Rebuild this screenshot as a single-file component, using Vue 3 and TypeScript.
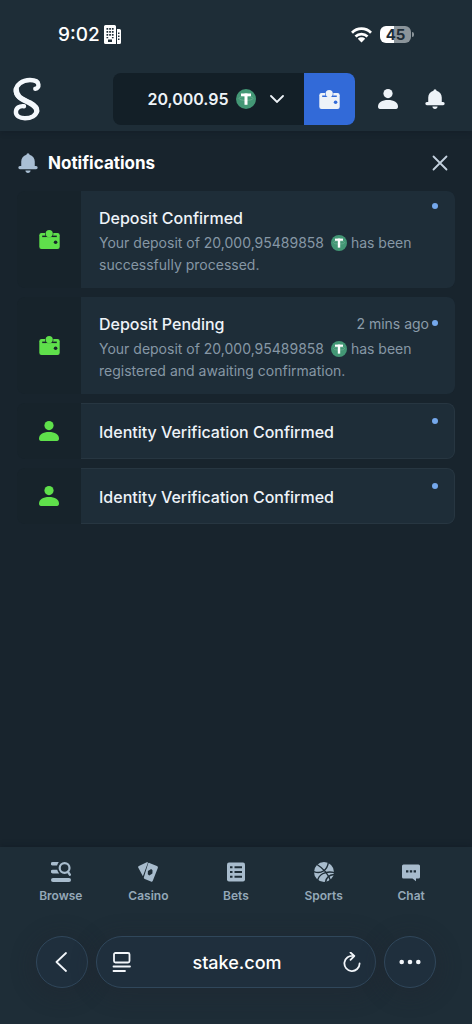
<script setup lang="ts">
import { ref } from 'vue'

interface Notice {
  id: number
  icon: 'wallet' | 'user'
  title: string
  time?: string
  amount?: string
  outcome?: string
}

interface NavItem {
  icon: string
  label: string
}

const notices: Notice[] = [
  { id: 1, icon: 'wallet', title: 'Deposit Confirmed', amount: '20,000,95489858', outcome: 'successfully processed.' },
  { id: 2, icon: 'wallet', title: 'Deposit Pending', time: '2 mins ago', amount: '20,000,95489858', outcome: 'registered and awaiting confirmation.' },
  { id: 3, icon: 'user', title: 'Identity Verification Confirmed' },
  { id: 4, icon: 'user', title: 'Identity Verification Confirmed' },
]

const navItems: NavItem[] = [
  { icon: 'browse', label: 'Browse' },
  { icon: 'casino', label: 'Casino' },
  { icon: 'bets', label: 'Bets' },
  { icon: 'sports', label: 'Sports' },
  { icon: 'chat', label: 'Chat' },
]

const address = ref('stake.com')
</script>

<template>
  <div class="screen">
    <svg class="sprite" aria-hidden="true">
      <symbol id="wallet" viewBox="0 0 21 19">
        <rect x="0.3" y="3" width="20.4" height="16" rx="2.2" />
        <path class="hole" d="M3.2 5.6h14.6v1.5H3.2z" />
        <circle class="hole" cx="10.2" cy="4" r="4.2" />
        <circle cx="10.2" cy="3.6" r="3.6" />
        <path d="M7 7.1h6.5v2H7z" />
        <circle class="hole" cx="16.6" cy="12.3" r="1.8" />
      </symbol>
      <symbol id="user" viewBox="0 0 20 20">
        <circle cx="10" cy="4.6" r="4.6" />
        <path d="M0 17.6C0 13.500 4 11 10 11s10 2.500 10 6.600c0 1.500-.6 2.400-2 2.400H2c-1.400 0-2-.9-2-2.400z" />
      </symbol>
      <symbol id="bell" viewBox="0 0 20 21">
        <path d="M8.400 1.900a1.600 1.600 0 0 1 3.200 0C15 2.700 17.100 5.500 17.100 9v4.700h1.400a1.500 1.500 0 0 1 0 3.300h-17a1.500 1.500 0 0 1 0-3.300h1.400V9c0-3.500 2.100-6.300 5.500-7.100z" />
        <path d="M7.300 18.300h5.400c0 1.600-1.200 2.600-2.700 2.600s-2.700-1-2.700-2.600z" />
      </symbol>
      <symbol id="tether" viewBox="0 0 20 20">
        <circle cx="10" cy="10" r="10" fill="#439775" />
        <ellipse cx="10" cy="9.400" rx="7" ry="2" fill="none" stroke="#74b398" stroke-width="0.7" />
        <rect x="5" y="4.500" width="10" height="2.700" fill="#fff" />
        <rect x="8.500" y="4.500" width="3" height="11.300" fill="#fff" />
      </symbol>
      <symbol id="browse" viewBox="0 0 20 20">
        <path d="M1.600 0h6.200a9 9 0 0 0-1.700 3.600H1.600a1.800 1.800 0 0 1 0-3.600zM1.600 7.800h4.600a9 9 0 0 0 2 3.600H1.600a1.800 1.800 0 0 1 0-3.600z" />
        <rect x="0" y="16" width="20" height="4" rx="2" />
        <circle cx="13.600" cy="6" r="4.900" fill="none" stroke="currentColor" stroke-width="2.200" />
        <path d="M16.800 9.700l2 3" fill="none" stroke="currentColor" stroke-width="2.400" stroke-linecap="round" />
      </symbol>
      <symbol id="casino" viewBox="0 0 20 20">
        <path d="M.9 4.100 8.700.3c.5-.2 1-.2 1.300.2L4.900 14.200.2 5.500C-.1 4.900.2 4.400.9 4.100z" />
        <path d="M11.400.9 18.900 4c.9.400 1.200 1 .9 1.900l-5 12.900c-.4.900-1 1.200-1.900.8l-6.100-2.500c-.9-.4-1.200-1-.9-1.900L10.100 1.500c.3-.7.7-.9 1.300-.6z" />
        <path class="hole" d="M13.200 6.900 9.900 8.900 9.800 12.300 11.300 13.500 14.400 11.500 14.500 8.200z" />
      </symbol>
      <symbol id="bets" viewBox="0 0 20 20">
        <rect x="1" y="0.500" width="18" height="19" rx="2" />
        <path class="hole" d="M4 4.200h2.500v2H4zM8.500 4.200H16v2H8.500zM4 9h2.500v2H4zM8.500 9H16v2H8.500zM4 13.800h2.500v2H4zM8.500 13.800H16v2H8.500z" />
      </symbol>
      <symbol id="sports" viewBox="0 0 20 20">
        <circle cx="10" cy="10" r="10" />
        <g class="seam">
          <path d="M3 2.500C7 5 13.500 10.500 16.500 18.500" />
          <path d="M-.5 9.500C7 12.500 13.500 8.500 14.500-.5" />
          <path d="M3.500 19C4.500 13 10.500 8.500 20.500 10.500" />
          <path d="M11.500 20.500C12 16 15 13 20.500 12.500" />
        </g>
      </symbol>
      <symbol id="chat" viewBox="0 0 20 20">
        <path d="M2.500 2.500h15A1.500 1.500 0 0 1 19 4v11a1.500 1.500 0 0 1-1.500 1.500H15v2.800l-3.500-2.800h-9A1.500 1.500 0 0 1 1 15V4a1.500 1.500 0 0 1 1.500-1.500z" />
        <path class="hole" d="M5 8.200h2.400v2.300H5zM8.800 8.200h2.400v2.300H8.800zM12.600 8.200H15v2.300h-2.400z" />
      </symbol>
    </svg>

    <header class="top">
      <div class="status">
        <div class="clock">
          <span>9:02</span>
          <svg class="building" viewBox="0 0 17 19" aria-hidden="true">
            <path d="M1.500 0h9A1.500 1.500 0 0 1 12 1.500V19H1.500A1.500 1.500 0 0 1 0 17.500v-16A1.500 1.500 0 0 1 1.500 0zM13 4h2.500A1.500 1.500 0 0 1 17 5.500v12a1.500 1.500 0 0 1-1.500 1.500H13z" />
            <path class="hole" d="M2.500 3h1.700v1.700H2.500zM5.200 3h1.700v1.700H5.200zM7.900 3h1.700v1.700H7.900zM2.500 6h1.700v1.700H2.500zM5.200 6h1.700v1.700H5.200zM7.900 6h1.700v1.700H7.900zM2.500 9h1.700v1.700H2.500zM5.200 9h1.700v1.700H5.200zM7.900 9h1.700v1.700H7.900zM2.500 12h1.700v1.200H2.500zM7.900 12h1.700v1.200H7.900zM4 14.500h4V17H4zM14 7.500h1.500V9H14zM14 10.500h1.500V12H14zM14 13.500h1.500V15H14z" />
          </svg>
        </div>
        <div class="signals">
          <svg class="wifi" viewBox="0 0 21 16" aria-label="Wi-Fi">
            <g fill="none" stroke="currentColor" stroke-width="2.700">
              <path d="M1 5.700C6.300.3 14.700.3 20 5.700" />
              <path d="M4.500 9.500c3.400-3.300 8.600-3.300 12 0" />
            </g>
            <path d="M6.800 11.700c2-1.900 5.400-1.900 7.400 0L10.500 15.600z" />
          </svg>
          <div class="battery"><span class="level">45</span></div>
        </div>
      </div>

      <div class="account">
        <a class="logo" href="#" aria-label="Stake home">
          <svg viewBox="0 0 28 44" aria-hidden="true">
            <path d="M22.300 11.800C24.600 11.600 25.700 9.600 25.400 7.500 25 4.500 21.500 3 17 3 9 3 2.900 8 2.900 14 3 20.500 10.500 22.500 17 26 21.500 28.500 24 30.500 23.900 33.500 23.600 38.500 18 41.300 12 41.300 6.300 41.300 2.900 38.800 2.900 35 2.900 31 6.500 28.600 11 29.200" />
            <path d="M3.200 12.500C3 20.500 10.500 22.500 17 26 21.500 28.500 24 30.500 23.800 34" class="spine" />
          </svg>
        </a>
        <div class="balance">
          <button class="amount" type="button">
            <span>20,000.95</span>
            <svg class="coin" aria-label="USDT"><use href="#tether" /></svg>
            <svg class="chevron" viewBox="0 0 14 8" aria-hidden="true"><path d="M1 1l6 6 6-6" /></svg>
          </button>
          <button class="pay" type="button" aria-label="Wallet">
            <svg class="wallet" aria-hidden="true"><use href="#wallet" /></svg>
          </button>
        </div>
        <div class="actions">
          <button type="button" aria-label="Profile"><svg class="icon" aria-hidden="true"><use href="#user" /></svg></button>
          <button type="button" aria-label="Notifications"><svg class="icon" aria-hidden="true"><use href="#bell" /></svg></button>
        </div>
      </div>
    </header>

    <main class="panel">
      <div class="heading">
        <svg class="icon" aria-hidden="true"><use href="#bell" /></svg>
        <h1>Notifications</h1>
        <button type="button" aria-label="Close">
          <svg viewBox="0 0 16 16" aria-hidden="true"><path d="M1.500 1.500l13 13M14.500 1.500l-13 13" /></svg>
        </button>
      </div>

      <ul class="list">
        <li v-for="notice in notices" :key="notice.id" class="notice" :class="{ brief: !notice.amount }">
          <div class="kind">
            <svg :class="notice.icon" aria-hidden="true"><use :href="'#' + notice.icon" /></svg>
          </div>
          <article class="card">
            <div class="title">
              <h2>{{ notice.title }}</h2>
              <time v-if="notice.time">{{ notice.time }}</time>
            </div>
            <p v-if="notice.amount">
              Your deposit of {{ notice.amount }}
              <svg class="coin" aria-label="USDT"><use href="#tether" /></svg>
              has been {{ notice.outcome }}
            </p>
            <span class="unread" :class="{ inline: notice.time }"></span>
          </article>
        </li>
      </ul>
    </main>

    <footer class="bottom">
      <nav class="tabs">
        <a v-for="item in navItems" :key="item.label" href="#">
          <svg aria-hidden="true"><use :href="'#' + item.icon" /></svg>
          <span>{{ item.label }}</span>
        </a>
      </nav>
      <div class="browser">
        <button class="round" type="button" aria-label="Back">
          <svg viewBox="0 0 20 20" aria-hidden="true"><path d="M14 1L4.500 10l9.500 9" /></svg>
        </button>
        <div class="address">
          <button type="button" aria-label="Page menu">
            <svg viewBox="0 0 20 20" aria-hidden="true"><rect x="2" y="1" width="15.500" height="9.500" rx="1.500" /><path d="M1.500 14.500H18M1.500 19H13" /></svg>
          </button>
          <input v-model="address" type="text" aria-label="Address" />
          <button type="button" aria-label="Reload">
            <svg viewBox="0 0 20 20" aria-hidden="true"><path d="M11.500 4A7.600 7.600 0 1 0 17.600 11.500M8.500.5L12.300 4 8.500 7.800" /></svg>
          </button>
        </div>
        <button class="round" type="button" aria-label="More">
          <svg class="dots" viewBox="0 0 22 6" aria-hidden="true"><circle cx="2.700" cy="3" r="2.300" /><circle cx="11" cy="3" r="2.300" /><circle cx="19.300" cy="3" r="2.300" /></svg>
        </button>
      </div>
    </footer>
  </div>
</template>

<style>
body {
  margin: 0;
  background: #18242d;
}
</style>

<style scoped>
.screen {
  display: flex;
  flex-direction: column;
  min-height: 100vh;
  background: #18242d;
  color: #eef3f8;
  font-family: Inter, "Liberation Sans", sans-serif;
}

.sprite {
  position: absolute;
  width: 0;
  height: 0;
}

svg {
  display: block;
  flex: none;
  fill: currentColor;
}

button {
  display: flex;
  align-items: center;
  justify-content: center;
  margin: 0;
  padding: 0;
  border: 0;
  background: none;
  color: inherit;
  font: inherit;
}

a {
  color: inherit;
  text-decoration: none;
}

h1,
h2,
p,
ul {
  margin: 0;
  padding: 0;
}

.hole {
  fill: var(--hole);
}

.seam {
  fill: none;
  stroke: var(--hole);
  stroke-width: 1.4;
}

.icon,
.user {
  width: 20px;
  height: 20px;
}

.wallet {
  width: 21px;
  height: 19px;
}

/* Top area */
.top {
  --hole: #1e2d37;
  padding-bottom: 6px;
  background: #1e2d37;
  box-shadow: 0 2px 5px rgba(10, 20, 30, 0.25);
}

.status {
  display: flex;
  align-items: center;
  justify-content: space-between;
  height: 69px;
  padding: 0 61px 0 58px;
  color: #fff;
}

.clock,
.signals {
  display: flex;
  align-items: center;
}

.clock {
  gap: 4px;
  font-size: 19px;
  font-weight: 500;
}

.building {
  width: 17px;
  height: 19px;
}

.signals {
  gap: 8px;
}

.wifi {
  width: 21px;
  height: 16px;
}

.battery {
  position: relative;
  width: 31px;
  height: 17px;
  border-radius: 6px;
  background: linear-gradient(90deg, #fff 45%, #8b949a 45%);
}

.battery::after {
  content: "";
  position: absolute;
  top: 6px;
  right: -3px;
  width: 2px;
  height: 5px;
  border-radius: 0 3px 3px 0;
  background: #8b949a;
}

.level {
  display: block;
  color: #1e2d37;
  font-size: 15px;
  font-weight: 700;
  line-height: 17px;
  text-align: center;
}

.account {
  display: flex;
  align-items: center;
  margin-top: 4px;
  padding: 0 27px 0 13px;
}

.logo svg {
  width: 28px;
  height: 44px;
  fill: none;
  stroke: #f4f8fc;
  stroke-width: 4.4;
  stroke-linecap: round;
}

.logo .spine {
  stroke-width: 5.4;
}

.balance {
  display: flex;
  flex: 1;
  height: 52px;
  margin-left: 72px;
  overflow: hidden;
  border-radius: 8px;
  background: #131f27;
}

.amount {
  flex: 1;
  padding-left: 14px;
  font-size: 16px;
  font-weight: 600;
}

.amount .coin {
  width: 20px;
  height: 20px;
  margin: 0 14px 0 7px;
}

.chevron {
  width: 14px;
  height: 8px;
  fill: none;
  stroke: currentColor;
  stroke-width: 1.8;
  stroke-linecap: round;
}

.pay {
  --hole: #326ad8;
  width: 51px;
  background: #326ad8;
}

.actions {
  display: flex;
  gap: 27px;
  margin-left: 23px;
}

/* Notifications */
.panel {
  flex: 1;
  padding: 16px 17px;
}

.heading {
  display: flex;
  align-items: center;
  height: 32px;
  padding-right: 7px;
}

.heading > .icon {
  margin: 0 10px 0 1px;
  color: #a9bfd4;
}

.heading h1 {
  flex: 1;
  color: #fff;
  font-size: 17px;
  font-weight: 700;
}

.heading button {
  width: 16px;
  height: 16px;
}

.heading button svg {
  width: 16px;
  height: 16px;
  stroke: #c3d1de;
  stroke-width: 1.8;
  stroke-linecap: round;
}

.list {
  display: grid;
  gap: 9px;
  margin-top: 12px;
  list-style: none;
}

.notice {
  display: grid;
  grid-template-columns: 64px 1fr;
  border-radius: 8px;
  background: #17232b;
}

.kind {
  --hole: #17232b;
  display: grid;
  place-items: center;
  color: #5fe04b;
}

.card {
  position: relative;
  padding: 16px 18px 12px;
  border-radius: 0 8px 8px 0;
  background: #1e2d38;
}

.brief .card {
  padding: 17px 17px 15px;
  border: 1px solid #273641;
  border-left: 0;
  padding-left: 18px;
}

.title {
  display: flex;
  justify-content: space-between;
  align-items: center;
  line-height: 22px;
}

.title h2 {
  font-size: 16px;
  font-weight: 500;
}

.title time {
  margin-right: 8px;
  color: #8b9caa;
  font-size: 14px;
}

.card p {
  max-width: 320px;
  margin-top: 3px;
  color: #8697a5;
  font-size: 14px;
  line-height: 22px;
}

.card .coin {
  display: inline-block;
  width: 16px;
  height: 16px;
  margin-left: 3px;
  vertical-align: -3px;
}

.unread {
  position: absolute;
  top: 12px;
  right: 17px;
  width: 6px;
  height: 6px;
  border-radius: 50%;
  background: #75a8ec;
}

.brief .unread {
  top: 14px;
  right: 16px;
}

.unread.inline {
  top: 23px;
}

/* Bottom area */
.bottom {
  --hole: #1e2d37;
  padding: 15px 17px 36px;
  background: #1e2d37;
  box-shadow: 0 -2px 5px rgba(10, 20, 30, 0.25);
}

.tabs {
  display: flex;
}

.tabs a {
  display: flex;
  flex: 1;
  flex-direction: column;
  align-items: center;
  gap: 5px;
  color: #a8bccd;
  font-size: 12px;
  font-weight: 600;
  line-height: 18px;
}

.tabs span {
  color: #94a8b8;
}

.tabs svg {
  width: 20px;
  height: 20px;
}

.browser {
  display: flex;
  gap: 8px;
  margin-top: 31px;
  padding: 0 19px;
}

.round,
.address {
  box-sizing: border-box;
  height: 52px;
  border: 1px solid #30475b;
  border-radius: 26px;
  background: #1f2f3d;
  box-shadow: 0 4px 20px 6px rgba(32, 38, 48, 0.3);
}

.round {
  flex: none;
  width: 52px;
}

.address {
  display: flex;
  flex: 1;
  align-items: center;
  min-width: 0;
  padding: 0 13px 0 15px;
}

.address input {
  flex: 1;
  min-width: 0;
  padding: 0;
  border: 0;
  outline: 0;
  background: none;
  color: #fff;
  font: 500 18px Inter, sans-serif;
  text-align: center;
}

.browser svg {
  width: 20px;
  height: 20px;
  fill: none;
  stroke: #f2f6fa;
  stroke-width: 1.8;
  stroke-linecap: round;
  stroke-linejoin: round;
}

.browser .dots {
  width: 22px;
  height: 6px;
  fill: #f2f6fa;
  stroke: none;
}
</style>
